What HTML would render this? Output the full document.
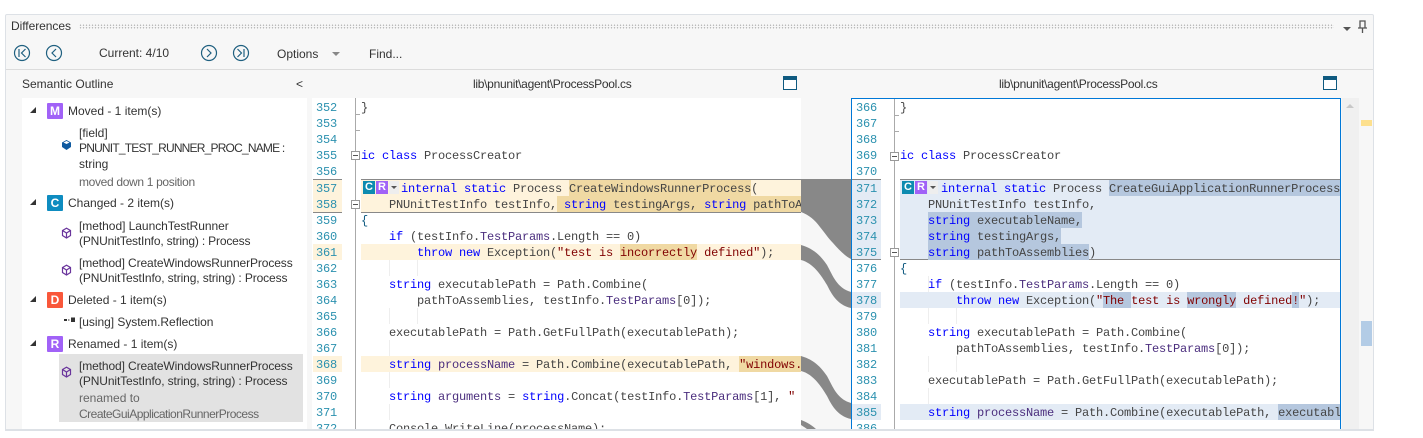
<!DOCTYPE html>
<html><head><meta charset="utf-8"><style>
html,body{margin:0;padding:0;background:#fff}
#r{position:relative;width:1423px;height:438px;overflow:hidden;background:#fff;font-family:"Liberation Sans",sans-serif;font-size:12px;color:#333}
#r div{position:absolute}
.t{white-space:pre;line-height:16px;height:16px}
.g{color:#666}
.c{font-family:"Liberation Mono",monospace;font-size:12px;letter-spacing:-.2px;white-space:pre;line-height:18px;height:16px;color:#444}
.n{font-family:"Liberation Mono",monospace;font-size:12px;letter-spacing:-.2px;line-height:18px;height:16px;color:#2b91af}
.c b{font-weight:normal;color:#0000ff}
.c i{font-style:normal;color:#800000}
.c u{text-decoration:none;color:#4b2e7e}
.h{background:#f0d9a3}
.k{background:#b5c7de}
.bd{width:16px;height:16px;color:#fff;font-weight:bold;font-size:12px;line-height:16px;text-align:center;border-radius:1px}
.tr{width:0;height:0;border-style:solid;border-width:0 0 6px 6px;border-color:transparent transparent #333 transparent}
.fb{width:7px;height:7px;border:1px solid #999;background:#fff}
.fb:after{content:"";position:absolute;left:1px;top:3px;width:5px;height:1px;background:#555}
.ig{width:1px;background:#eee}
.cb{width:12px;height:13px;color:#fff;font-weight:bold;font-size:11px;line-height:13px;text-align:center}
span.h,span.k{display:inline-block;height:16px}
</style></head><body><div id="r">

<div style="left:5px;top:14px;width:1367px;height:415px;background:#f7f7f7;border:1px solid #dde1e6;border-radius:2px"></div>
<div class="t" style="left:11px;top:18px;letter-spacing:-.05px">Differences</div>
<div style="left:79px;top:24px;width:1255px;height:5px;background-image:radial-gradient(#bbb 0.7px,transparent 0.8px);background-size:3px 2.5px"></div>
<svg style="position:absolute;left:1340px;top:20px" width="30" height="14"><path d="M3 7h8l-4 4z" fill="#555"/><path d="M20 1h5v7h-5zM18 8h9M22.500 8v5" fill="none" stroke="#555" stroke-width="1.300"/></svg>

<svg style="position:absolute;left:10px;top:42px" width="240" height="22" fill="none" stroke="#1f6080" stroke-width="1.200">
<circle cx="12" cy="11" r="7.500"/><path d="M9 7v8M15.500 7l-4 4 4 4"/>
<circle cx="44" cy="11" r="7.500"/><path d="M46 7l-4 4 4 4"/>
<circle cx="199" cy="11" r="7.500"/><path d="M197 7l4 4-4 4"/>
<circle cx="231" cy="11" r="7.500"/><path d="M227.500 7l4 4-4 4M234 7v8"/>
</svg>
<div class="t" style="left:99px;top:45px">Current: 4/10</div>
<div class="t" style="left:277px;top:46px">Options</div>
<div style="left:332px;top:52px;width:0;height:0;border:4px solid transparent;border-top:4px solid #888;border-bottom:0"></div>
<div class="t" style="left:369px;top:46px">Find...</div>
<div style="left:6px;top:69px;width:1367px;height:1px;background:#dcdcdc"></div>

<div class="t" style="left:22px;top:76px">Semantic Outline</div>
<div class="t" style="left:296px;top:76px">&lt;</div>
<div class="t" style="left:473px;top:76px;letter-spacing:-.29px">lib\pnunit\agent\ProcessPool.cs</div>
<div class="t" style="left:999px;top:76px;letter-spacing:-.29px">lib\pnunit\agent\ProcessPool.cs</div>
<div style="left:783px;top:76px;width:12px;height:9px;border:1px solid #0f5a80;border-top:4px solid #0f5a80;background:#fff"></div>
<div style="left:1323px;top:76px;width:12px;height:9px;border:1px solid #0f5a80;border-top:4px solid #0f5a80;background:#fff"></div>

<!-- tree -->
<div style="left:22px;top:98px;width:285px;height:332px;background:#fff"></div>
<div style="left:59px;top:354px;width:244px;height:68px;background:#e2e2e2"></div>
<div class="tr" style="left:30px;top:107px"></div><div class="bd" style="left:47px;top:103px;background:#a162f7">M</div>
<div class="t" style="left:68px;top:103px">Moved - 1 item(s)</div>
<svg style="position:absolute;left:61px;top:139px" width="12" height="12"><path d="M1 3.500L5.500 1 10 3.500 10 8 5.500 11 1 8z" fill="#0f5aa0"/><path d="M2.500 3.500L5.500 2 8.500 3.500 5.500 5z" fill="#fff"/></svg>
<div class="t" style="left:79px;top:125px">[field]</div>
<div class="t" style="left:79px;top:140px;letter-spacing:-.8px">PNUNIT_TEST_RUNNER_PROC_NAME :</div>
<div class="t" style="left:79px;top:156px">string</div>
<div class="t g" style="left:79px;top:174px;letter-spacing:-.33px">moved down 1 position</div>
<div class="tr" style="left:30px;top:199px"></div><div class="bd" style="left:47px;top:195px;background:#0e8cc0">C</div>
<div class="t" style="left:68px;top:195px">Changed - 2 item(s)</div>
<div class="t" style="left:79px;top:218px;letter-spacing:-.04px">[method] LaunchTestRunner</div>
<div class="t" style="left:79px;top:233px;letter-spacing:-.18px">(PNUnitTestInfo, string) : Process</div>
<div class="t" style="left:79px;top:255px;letter-spacing:-.11px">[method] CreateWindowsRunnerProcess</div>
<div class="t" style="left:79px;top:270px;letter-spacing:-.12px">(PNUnitTestInfo, string, string) : Process</div>
<div class="tr" style="left:30px;top:296px"></div><div class="bd" style="left:47px;top:292px;background:#f9573a">D</div>
<div class="t" style="left:68px;top:292px">Deleted - 1 item(s)</div>
<svg style="position:absolute;left:63px;top:317px" width="13" height="8"><path d="M1 2h3v2H1zM5 2.500h1.500v1H5z" fill="#333"/><rect x="8" y="0.500" width="4" height="4.500" fill="#333"/></svg>
<div class="t" style="left:79px;top:314px;letter-spacing:-.04px">[using] System.Reflection</div>
<div class="tr" style="left:30px;top:340px"></div><div class="bd" style="left:47px;top:336px;background:#a162f7">R</div>
<div class="t" style="left:68px;top:336px">Renamed - 1 item(s)</div>
<div class="t" style="left:79px;top:358px;letter-spacing:-.11px">[method] CreateWindowsRunnerProcess</div>
<div class="t" style="left:79px;top:373px;letter-spacing:-.12px">(PNUnitTestInfo, string, string) : Process</div>
<div class="t g" style="left:79px;top:390px">renamed to</div>
<div class="t g" style="left:79px;top:406px;letter-spacing:-.5px">CreateGuiApplicationRunnerProcess</div>
<svg style="position:absolute;left:61px;top:227px" width="12" height="13" fill="none" stroke="#6a359c" stroke-width="1.200"><path d="M1.500 3.500L5.500 1.200 9.500 3.500V8.500L5.500 11 1.500 8.500zM1.500 3.500L5.500 6 9.500 3.500M5.500 6v5"/></svg>
<svg style="position:absolute;left:61px;top:264px" width="12" height="13" fill="none" stroke="#6a359c" stroke-width="1.200"><path d="M1.500 3.500L5.500 1.200 9.500 3.500V8.500L5.500 11 1.500 8.500zM1.500 3.500L5.500 6 9.500 3.500M5.500 6v5"/></svg>
<svg style="position:absolute;left:61px;top:366px" width="12" height="13" fill="none" stroke="#6a359c" stroke-width="1.200"><path d="M1.500 3.500L5.500 1.200 9.500 3.500V8.500L5.500 11 1.500 8.500zM1.500 3.500L5.500 6 9.500 3.500M5.500 6v5"/></svg>

<!-- connector -->
<svg style="position:absolute;left:801px;top:98px" width="50" height="332" fill="#888">
<path d="M0 81H50V161C44 158 38 152 32 145 27 140 24 135 19 129 14 122 8 117 0 114z"/>
<path d="M0 147C10 150 18 155 26 167 32 178 36 190 50 194V210C36 207 30 195 26 187 20 177 12 165 0 162z"/>
<path d="M0 258C10 261 18 266 26 278 32 289 36 301 50 305V321C36 318 30 306 26 298 20 288 12 276 0 273z"/>
<path d="M0 322C6 324 12 328 16 332H7C5 330 3 329 0 327z"/>
</svg>

<!-- left pane -->
<div style="left:312px;top:98px;width:489px;height:332px;background:#fff;overflow:hidden">
 <div style="left:1px;top:81px;width:29px;height:33px;background:#fef3dc"></div>
 <div style="left:1px;top:146px;width:29px;height:16px;background:#fef3dc"></div>
 <div style="left:1px;top:258px;width:29px;height:16px;background:#fef3dc"></div>
 <div style="left:49px;top:82px;width:440px;height:32px;background:#fef3dc"></div>
 <div style="left:49px;top:146px;width:440px;height:16px;background:#fef3dc"></div>
 <div style="left:49px;top:258px;width:440px;height:16px;background:#fef3dc"></div>
 <div style="left:1px;top:81px;width:29px;height:1px;background:#888"></div>
 <div style="left:49px;top:81px;width:440px;height:1px;background:#888"></div>
 <div style="left:1px;top:114px;width:29px;height:1px;background:#888"></div>
 <div style="left:49px;top:114px;width:440px;height:1px;background:#888"></div>
 <div style="left:43px;top:0;width:1px;height:332px;background:#aaa"></div>
 <div style="left:44px;top:16px;width:4px;height:1px;background:#aaa"></div>
 <div style="left:44px;top:32px;width:4px;height:1px;background:#aaa"></div>
 <div class="fb" style="left:39px;top:53px"></div>
 <div class="fb" style="left:39px;top:102px"></div>
 <div class="ig" style="left:77px;top:162px;height:16px"></div><div class="ig" style="left:105px;top:162px;height:16px"></div>
 <div class="ig" style="left:77px;top:210px;height:16px"></div><div class="ig" style="left:105px;top:210px;height:16px"></div>
 <div class="ig" style="left:77px;top:242px;height:16px"></div>
 <div class="ig" style="left:77px;top:274px;height:16px"></div>
 <div class="ig" style="left:77px;top:306px;height:16px"></div>
 <div class="n" style="left:4px;top:1px">352</div>
 <div class="n" style="left:4px;top:17px">353</div>
 <div class="n" style="left:4px;top:33px">354</div>
 <div class="n" style="left:4px;top:49px">355</div>
 <div class="n" style="left:4px;top:65px">356</div>
 <div class="n" style="left:4px;top:82px">357</div>
 <div class="n" style="left:4px;top:98px">358</div>
 <div class="n" style="left:4px;top:114px">359</div>
 <div class="n" style="left:4px;top:130px">360</div>
 <div class="n" style="left:4px;top:146px">361</div>
 <div class="n" style="left:4px;top:162px">362</div>
 <div class="n" style="left:4px;top:178px">363</div>
 <div class="n" style="left:4px;top:194px">364</div>
 <div class="n" style="left:4px;top:210px">365</div>
 <div class="n" style="left:4px;top:226px">366</div>
 <div class="n" style="left:4px;top:242px">367</div>
 <div class="n" style="left:4px;top:258px">368</div>
 <div class="n" style="left:4px;top:274px">369</div>
 <div class="n" style="left:4px;top:290px">370</div>
 <div class="n" style="left:4px;top:306px">371</div>
 <div class="n" style="left:4px;top:322px">372</div>

 <div class="c" style="left:49px;top:1px">}</div>
 <div class="c" style="left:49px;top:49px"><b>ic class</b> ProcessCreator</div>
 <div class="cb" style="left:51px;top:83px;background:#0d8bb0">C</div>
 <div class="cb" style="left:64px;top:83px;background:#a162f7">R</div>
 <div style="left:77px;top:83px;width:10px;height:13px;background:#eee"></div>
 <div style="left:79px;top:88px;width:0;height:0;border:3px solid transparent;border-top:3px solid #555;border-bottom:0"></div>
 <div class="c" style="left:89px;top:82px"><b>internal static</b> Process <span class="h">CreateWindowsRunnerProcess</span>(</div>
 <div class="c" style="left:77px;top:98px">PNUnitTestInfo testInfo,<span class="h"> <b>string</b> testingArgs, <b>string</b> pathToA</span></div>
 <div class="c" style="left:49px;top:114px;color:#0f5a80">{</div>
 <div class="c" style="left:77px;top:130px"><b>if</b> (testInfo.<u>TestParams</u>.Length == 0)</div>
 <div class="c" style="left:105px;top:146px"><b>throw new</b> Exception(<i>"test is <span class="h">incorrectly</span> defined"</i>);</div>
 <div class="c" style="left:77px;top:178px"><b>string</b> executablePath = Path.Combine(</div>
 <div class="c" style="left:105px;top:194px">pathToAssemblies, testInfo.<u>TestParams</u>[0]);</div>
 <div class="c" style="left:77px;top:226px">executablePath = Path.GetFullPath(executablePath);</div>
 <div class="c" style="left:77px;top:258px"><b>string</b> <u>processName</u> = Path.Combine(executablePath, <span class="h"><i>"windows.</i></span></div>
 <div class="c" style="left:77px;top:290px"><b>string</b> <u>arguments</u> = <b>string</b>.Concat(testInfo.<u>TestParams</u>[1], <i>"</i></div>
 <div class="c" style="left:77px;top:322px">Console.WriteLine(processName);</div>
</div>

<!-- right pane -->
<div style="left:851px;top:98px;width:488px;height:332px;background:#fff;overflow:hidden;border:1px solid #0078d7;border-bottom:0">
 <div style="left:0;top:81px;width:29px;height:80px;background:#e3ebf5"></div>
 <div style="left:0;top:193px;width:29px;height:16px;background:#e3ebf5"></div>
 <div style="left:0;top:305px;width:29px;height:16px;background:#e3ebf5"></div>
 <div style="left:48px;top:81px;width:440px;height:80px;background:#e3ebf5"></div>
 <div style="left:48px;top:193px;width:440px;height:16px;background:#e3ebf5"></div>
 <div style="left:48px;top:305px;width:440px;height:16px;background:#e3ebf5"></div>
 <div style="left:0;top:80px;width:29px;height:1px;background:#888"></div>
 <div style="left:48px;top:80px;width:440px;height:1px;background:#888"></div>
 <div style="left:0;top:160px;width:29px;height:1px;background:#888"></div>
 <div style="left:48px;top:160px;width:440px;height:1px;background:#888"></div>
 <div style="left:42px;top:0;width:1px;height:332px;background:#aaa"></div>
 <div style="left:43px;top:16px;width:4px;height:1px;background:#aaa"></div>
 <div style="left:43px;top:32px;width:4px;height:1px;background:#aaa"></div>
 <div class="fb" style="left:38px;top:53px"></div>
 <div class="fb" style="left:38px;top:149px"></div>
 <div class="ig" style="left:76px;top:177px;height:16px"></div>
 <div class="ig" style="left:76px;top:209px;height:16px"></div><div class="ig" style="left:104px;top:209px;height:16px"></div>
 <div class="ig" style="left:76px;top:257px;height:16px"></div><div class="ig" style="left:104px;top:257px;height:16px"></div>
 <div class="ig" style="left:76px;top:289px;height:16px"></div>
 <div class="n" style="left:4px;top:0">366</div>
 <div class="n" style="left:4px;top:16px">367</div>
 <div class="n" style="left:4px;top:32px">368</div>
 <div class="n" style="left:4px;top:48px">369</div>
 <div class="n" style="left:4px;top:64px">370</div>
 <div class="n" style="left:4px;top:81px">371</div>
 <div class="n" style="left:4px;top:97px">372</div>
 <div class="n" style="left:4px;top:113px">373</div>
 <div class="n" style="left:4px;top:129px">374</div>
 <div class="n" style="left:4px;top:145px">375</div>
 <div class="n" style="left:4px;top:161px">376</div>
 <div class="n" style="left:4px;top:177px">377</div>
 <div class="n" style="left:4px;top:193px">378</div>
 <div class="n" style="left:4px;top:209px">379</div>
 <div class="n" style="left:4px;top:225px">380</div>
 <div class="n" style="left:4px;top:241px">381</div>
 <div class="n" style="left:4px;top:257px">382</div>
 <div class="n" style="left:4px;top:273px">383</div>
 <div class="n" style="left:4px;top:289px">384</div>
 <div class="n" style="left:4px;top:305px">385</div>
 <div class="n" style="left:4px;top:321px">386</div>

 <div class="c" style="left:48px;top:0">}</div>
 <div class="c" style="left:48px;top:48px"><b>ic class</b> ProcessCreator</div>
 <div class="cb" style="left:50px;top:82px;background:#0d8bb0">C</div>
 <div class="cb" style="left:63px;top:82px;background:#a162f7">R</div>
 <div style="left:76px;top:82px;width:10px;height:13px;background:#eee"></div>
 <div style="left:78px;top:87px;width:0;height:0;border:3px solid transparent;border-top:3px solid #555;border-bottom:0"></div>
 <div class="c" style="left:89px;top:81px"><b>internal static</b> Process <span class="k">CreateGuiApplicationRunnerProcess</span></div>
 <div class="c" style="left:76px;top:97px">PNUnitTestInfo testInfo,</div>
 <div class="c" style="left:76px;top:113px"><span class="k"><b>string</b> executableName,</span></div>
 <div class="c" style="left:76px;top:129px"><span class="k"><b>string</b> testingArgs,</span></div>
 <div class="c" style="left:76px;top:145px"><span class="k"><b>string</b> pathToAssemblies</span>)</div>
 <div class="c" style="left:48px;top:161px;color:#0f5a80">{</div>
 <div class="c" style="left:76px;top:177px"><b>if</b> (testInfo.<u>TestParams</u>.Length == 0)</div>
 <div class="c" style="left:104px;top:193px"><b>throw new</b> Exception(<i>"<span class="k">The </span>test is <span class="k">wrongly</span> defined<span class="k">!</span>"</i>);</div>
 <div class="c" style="left:76px;top:225px"><b>string</b> executablePath = Path.Combine(</div>
 <div class="c" style="left:104px;top:241px">pathToAssemblies, testInfo.<u>TestParams</u>[0]);</div>
 <div class="c" style="left:76px;top:273px">executablePath = Path.GetFullPath(executablePath);</div>
 <div class="c" style="left:76px;top:305px"><b>string</b> <u>processName</u> = Path.Combine(executablePath, <span class="k">executabl</span></div>
</div>

<!-- scrollbar -->
<div style="left:1342px;top:98px;width:17px;height:332px;background:#f0f0f0"></div>
<div style="left:1346px;top:104px;width:0;height:0;border:4px solid transparent;border-bottom:4px solid #c8c8c8;border-top:0"></div>
<div style="left:1361px;top:120px;width:11px;height:6px;background:#fde08e"></div>
<div style="left:1361px;top:321px;width:11px;height:25px;background:#b3cce6"></div>
<div style="left:5px;top:429px;width:1369px;height:2px;background:#dde1e6"></div>
</div></body></html>
